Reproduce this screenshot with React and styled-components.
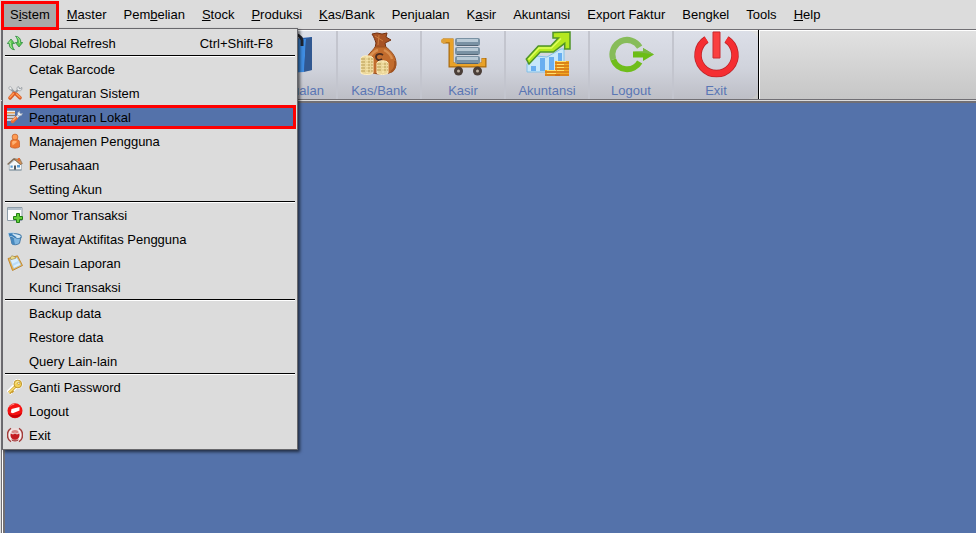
import React from "react";
import styled, { createGlobalStyle, css } from "styled-components";

const GlobalStyle = createGlobalStyle`
    * {
        box-sizing: border-box;
    }

    body {
        margin: 0;
        background: #dcdcdc;
        font-family: "Liberation Sans", Arial, sans-serif;
        font-size: 13px;
        line-height: 16px;
        color: #000;
    }

    button {
        font: inherit;
        color: inherit;
        border: 0;
        margin: 0;
        cursor: default;
    }
`;
const Window = styled.div`
    position: relative;
    min-height: 100vh;
    display: flex;
    flex-direction: column;
`;
const MenuBar = styled.nav`
    display: flex;
    gap: 1px;
    height: 29px;
    padding: 2px 2px 0;
    background: #dcdcdc;
`;
const MenuButton = styled.button`
    position: relative;
    height: 27px;
    padding: 0 8px 2px;
    background: transparent;
    white-space: nowrap;

    ${(props) => props.$open && css`
        z-index: 3;
        background: #a9a9a9;
        outline: 3px solid #fe0000;
        outline-offset: -2px;
    `}
`;
const ToolBar = styled.div`
    display: flex;
    height: 71px;
    margin-left: 1px;
    padding-left: 252px;
    border: 1px solid #716f74;
    border-right: 0;
    box-shadow: inset 0 1px #fff;
    background: linear-gradient(#e2e2e2, #c6c6c6);
`;
const ToolGroup = styled.div`
    display: flex;
    margin-top: 1px;
    border-radius: 0 10px 10px 0;
    background: linear-gradient(#dcdfe8, #d0d3dc 55%, #bdbec6);
`;
const ToolEnd = styled.div`
    width: 2px;
    border-left: 1px solid #000;
    border-right: 1px solid #fff;
`;
const ToolButton = styled.button`
    display: flex;
    flex-direction: column;
    align-items: center;
    width: 84px;
    padding: 0;
    color: #5a76b4;
    background: transparent;

    &:not(:last-child) {
        border-right: 2px solid #c3c5ce;
    }

    svg {
        height: 48px;
        width: 48px;
        margin-bottom: 4px;
        flex: none;
    }
`;
const Desktop = styled.main`
    flex: 1;
    margin: 1px 0 0 1px;
    border-left: 1px solid #716f74;
    background: #fff;
    padding-left: 1px;
    display: flex;
`;
const Canvas = styled.div`
    flex: 1;
    border-top: 2px solid #716f74;
    border-left: 2px solid #716f74;
    background: #5472aa;
`;
const Popup = styled.div`
    position: absolute;
    z-index: 2;
    top: 28px;
    left: 2px;
    width: 296px;
    padding: 2px 1px;
    border: 1px solid #68686c;
    background: #dcdcdc;
    box-shadow: 2px 2px 3px rgba(0, 0, 0, 0.6);
`;
const Item = styled.button`
    display: flex;
    align-items: center;
    gap: 6px;
    width: 100%;
    height: 24px;
    padding: 0 23px 0 3px;
    text-align: left;
    line-height: 18px;
    background: transparent;

    ${(props) => props.$active && css`
        background: #5472aa;
        outline: 3px solid #fe0000;
        outline-offset: -3px;
    `}
`;
const IconSlot = styled.span`
    width: 16px;
    height: 16px;
    flex: none;

    svg {
        display: block;
    }
`;
const Label = styled.span`
    flex: 1;
    padding-top: 1px;
`;
const Shortcut = styled.span`
    padding-top: 1px;
`;
const Separator = styled.hr`
    height: 2px;
    margin: 0 1px;
    border: 0;
    border-top: 1px solid #000;
    border-bottom: 1px solid #fff;
`;

const Small = ({ children }) => (
    <svg width="16" height="16" viewBox="0 0 16 16" aria-hidden="true">{children}</svg>
);
const Large = ({ children }) => (
    <svg width="48" height="48" viewBox="0 0 48 48" aria-hidden="true">{children}</svg>
);

const icons = {
    refresh: (
        <Small>
            <path d="M7.500 14.800C4 14.500 2 12 2.200 8.500H.3L4 4l3.600 4.500H5.400C5.200 11 5.800 13 7.500 14.800z" fill="#5cc850" stroke="#23843a" strokeWidth=".7" />
            <path d="M8.500 1.200C12 1.500 14 4 13.800 7.500h1.900L12 12 8.400 7.500h2.200C10.800 5 10.200 3 8.500 1.200z" fill="#5cc850" stroke="#23843a" strokeWidth=".7" />
            <path d="M4 5.500L2 7.800h1.500C3.300 10 3.800 12 5 13.300M10 2.300c2 1 2.800 3 2.600 5.800" stroke="#b3ea9f" strokeWidth=".9" fill="none" />
        </Small>
    ),
    tools: (
        <Small>
            <path d="M12.800 3L7 9" stroke="#8e959b" strokeWidth="2" />
            <path d="M10 2.500l1.500-1 .6 2 2 .4.600-1.700c1 2.500-.8 4-2.800 3.600L10 4.500z" fill="#eef0f1" stroke="#92989e" strokeWidth=".7" />
            <path d="M3 3l5.500 5.500" stroke="#92989e" strokeWidth="2.200" />
            <path d="M2 2l1.800-.3 1.500 2.600-1.300.8-2.200-1.500z" fill="#f3f3f3" stroke="#92989e" strokeWidth=".6" />
            <path d="M7 8.500L3 13" stroke="#db5a25" strokeWidth="3.600" strokeLinecap="round" />
            <path d="M6.500 8.500L3 12.300" stroke="#ff9b52" strokeWidth="1.600" strokeLinecap="round" />
            <path d="M9.300 9.300l3.700 3.500" stroke="#db5a25" strokeWidth="3.600" strokeLinecap="round" />
            <path d="M9.500 9l3.500 3.300" stroke="#ff9b52" strokeWidth="1.500" strokeLinecap="round" />
        </Small>
    ),
    local: (
        <Small>
            <path d="M0 2h8v3H0z" fill="#e7a863" />
            <path d="M0 2.500h8M0 5h8M0 8h8M0 11h6" stroke="#eef0ee" strokeWidth="1.400" />
            <path d="M0 3.800h8" stroke="#e39a4c" strokeWidth="1.200" />
            <path d="M0 6.500h8M0 9.500h7" stroke="#987d5e" strokeWidth=".9" />
            <path d="M5.500 12.500L9.500 8.500" stroke="#ec6c2f" strokeWidth="3.400" strokeLinecap="round" />
            <path d="M5.500 11.500L9 8.300" stroke="#ffb078" strokeWidth="1.200" />
            <path d="M9.800 8.200l2.700-2.700" stroke="#dce2e8" strokeWidth="2" />
            <path d="M10.500 5.500l.3-2 2-1.600-.1 2.100 1 .8 2-.5-1.300 2.200-2.400.5z" fill="#f3f5f8" stroke="#8a97ab" strokeWidth=".6" />
        </Small>
    ),
    user: (
        <Small>
            <path d="M3.500 14V9.500C3.500 7.300 5 6.200 8 6.200s4.500 1.100 4.500 3.300V14c-2.500 1.500-6.500 1.500-9 0z" fill="#ef7830" stroke="#bc4e18" strokeWidth=".6" />
            <circle cx="8" cy="4" r="2.900" fill="#ff9c54" stroke="#bd5b24" strokeWidth=".7" />
            <path d="M5 9c1-1.700 4.500-1.500 5 0l-4.500 3.500z" fill="#ffb071" />
        </Small>
    ),
    home: (
        <Small>
            <path d="M2.300 7.500L7 3.500h4.500l3 4V13H2.300z" fill="#f5f7f8" stroke="#9daab5" strokeWidth=".7" />
            <path d="M.6 7.500L6.700 2l1.200.2 5.900 5.300" fill="none" stroke="#7e6c59" strokeWidth="1.500" />
            <path d="M7 2h6l2.300 4.700-1.800.8L8 2.700z" fill="#cf9158" stroke="#796148" strokeWidth=".6" />
            <path d="M11 1h2v3h-2z" fill="#e56a35" />
            <path d="M3.500 8.500h2.200v2.300H3.500zM10 8h3v2.500h-3z" fill="#589cd3" />
            <path d="M7 8.500h2V13H7z" fill="#51585e" />
            <path d="M2.300 13h12.200" stroke="#7d909c" />
        </Small>
    ),
    addForm: (
        <Small>
            <path d="M.5.5h14.500v13H.5z" fill="#fbfcfd" stroke="#8e9da9" />
            <path d="M1 1h13.500v2H1z" fill="#b4c1cc" />
            <path d="M9.500 6.500h3v3h3v3h-3v3h-3v-3h-3v-3h3z" fill="#62cf39" stroke="#217e16" />
        </Small>
    ),
    history: (
        <Small>
            <path d="M3.200 5L5 13c2 1.200 5.500 1 7.500-.7L14 6z" fill="#7fb6e0" stroke="#316798" strokeWidth=".8" />
            <path d="M3.200 5L5 13c1 .6 2 .8 3 .7L6.500 6z" fill="#4788bd" />
            <ellipse cx="8.800" cy="5" rx="5.500" ry="2.200" fill="#d5e8f5" stroke="#3c78a9" transform="rotate(8 8.800 5)" />
            <path d="M1 2l6-.3-1.500 1.500 4.500 3-1.500 1.600L4 5 2.500 6.500z" fill="#367cb7" stroke="#cce3f2" strokeWidth=".6" />
        </Small>
    ),
    clipboard: (
        <Small>
            <path d="M1 3.500L10.500.8l5 9.700-10 5z" fill="#f2b64c" stroke="#b87b22" strokeWidth=".8" />
            <path d="M3 4.500l7-2 4 7.500-7.300 3.500z" fill="#d9eeff" stroke="#89b4d9" strokeWidth=".5" />
            <path d="M5.500 10l6-3" stroke="#b9dcf8" strokeWidth="2" />
            <path d="M3.500 2.800l1.300-2.100 2 .7 1.400.5.300 1.500-4.500 1.200z" fill="#f0e08c" stroke="#94834b" strokeWidth=".6" />
        </Small>
    ),
    key: (
        <Small>
            <path d="M8.600 7L1.500 14" stroke="#fff" strokeWidth="5.500" />
            <circle cx="10.800" cy="5" r="4.900" fill="#fff" />
            <path d="M9 7L2 13.800M4.500 11.500l1.700 1.700M3 13l1.200 1.200" stroke="#c89a2c" strokeWidth="2.800" />
            <path d="M9 7L2 13.500" stroke="#f7db6f" strokeWidth="1.700" />
            <circle cx="10.800" cy="5" r="3.900" fill="#f2cf57" stroke="#b28925" strokeWidth=".8" />
            <path d="M8.500 4.500C9 3 10.500 2 12 2.500" stroke="#fff1a8" fill="none" />
            <circle cx="11.800" cy="4.300" r="1.100" fill="#fff" stroke="#a57d20" strokeWidth=".6" />
        </Small>
    ),
    stop: (
        <Small>
            <circle cx="8" cy="7.700" r="7.500" fill="#f51212" />
            <path d="M1 10a7.500 7.500 0 0 0 14-.2C11 13 5 13 1 10z" fill="#c60007" />
            <path d="M4.500 6L12.500 4v3.600L5.800 10.300l-2-.8z" fill="#fff" />
            <path d="M2.800 3.600C4 2 5.500 1.400 7.300 1.300" stroke="#ff8a81" fill="none" />
        </Small>
    ),
    exit: (
        <Small>
            <circle cx="8" cy="8" r="7" fill="#efdcdb" />
            <path d="M4 1.300C-.7 4-.7 12 4 14.700M12 1.300c4.700 2.700 4.700 10.700 0 13.400" fill="none" stroke="#a33c3a" strokeWidth="1.500" />
            <path d="M4.500 3C2 5.500 2 10.500 4.500 13M11.500 3c2.500 2.500 2.500 7.500 0 10" fill="none" stroke="#fbf4f3" strokeWidth="1.200" />
            <path d="M3.800 6.500L6 7.500l2-1 2 1 2.200-1c1 3-.8 6.300-4.200 6.300S2.800 9.500 3.800 6.500z" fill="#c41c22" />
            <path d="M4.300 5.200c1-3 6.400-3 7.400 0L9.800 6.500 8 5.500l-1.800 1z" fill="#d98785" />
            <path d="M4.700 12.800c2 1.500 4.600 1.500 6.600 0" stroke="#8f1b1c" fill="none" />
        </Small>
    ),
    shopping: (
        <Large>
            <path d="M10 9l31-3v33l-27 3z" fill="#285fae" />
            <path d="M10 9l25-1-2 33-19 1z" fill="#3f8de2" />
            <path d="M35 8l6-2v33l-8 2z" fill="#315891" />
            <path d="M14 14V9c0-8 15-8 17 0v6" fill="none" stroke="#20242f" strokeWidth="3" />
        </Large>
    ),
    money: (
        <Large>
            <path d="M17 3l5-1 5 1 5-1-1 4 5 3-6 3 1 5H20l1-5c-1-3-2-6-4-9z" fill="#a75325" stroke="#733111" />
            <path d="M20 5l8 5M24 4l-1 10" stroke="#cd7d40" />
            <path d="M20 16h11c5 4 10 9 10 16 0 8-5 11-15 11S11 40 11 31c0-7 6-10 9-15z" fill="#c26c2d" stroke="#985020" />
            <path d="M15 26c2-4 5-6 8-7M29 19c4 2 7 5 8 9" stroke="#d98f50" strokeWidth="2.500" fill="none" />
            <path d="M36 41c3-2 5-6 4-11" stroke="#a15320" strokeWidth="2" fill="none" />
            <path d="M28 24c-3-2-7-1-7 2s3 4 6 2" fill="none" stroke="#4d2d20" strokeWidth="1.800" />
            <path d="M6 27c1-3 10-3 12 0v15c-2 2-10 2-12 0zM22 32c1-3 10-3 11 0v10c-2 2-9 2-11 0z" fill="#ead69a" stroke="#fff0c2" />
            <path d="M6 28h12M6 31h12M6 34h12M6 37h12M6 40h12M22 33h11M22 36h11M22 39h11" stroke="#b99c50" strokeDasharray="4 1" />
            <path d="M12 25v17M28 30v12" stroke="#fff0b8" />
        </Large>
    ),
    cart: (
        <Large>
            <path d="M4 10h8v24h33v-7" fill="none" stroke="#a96b10" strokeWidth="5" />
            <path d="M4 9.500h8.500v24h32v-6" fill="none" stroke="#e9a228" strokeWidth="3.500" />
            <circle cx="4.500" cy="10" r="2.500" fill="#dca03c" />
            <rect x="16" y="7" width="25" height="8" rx="2" fill="#7991a3" />
            <rect x="16" y="16" width="25" height="8" rx="2" fill="#7991a3" />
            <rect x="16" y="25" width="25" height="8" rx="2" fill="#7991a3" />
            <path d="M18 9.500h21M18 18.500h21M18 27.500h21" stroke="#b8c9d5" strokeWidth="3" />
            <path d="M18 14.500h21M18 23.500h21M18 32.500h21" stroke="#526575" />
            <circle cx="19.500" cy="40" r="4.500" fill="#4a3e38" />
            <circle cx="38.500" cy="40" r="4.500" fill="#4a3e38" />
            <circle cx="19.500" cy="40" r="1.500" fill="#bbb0a3" />
            <circle cx="38.500" cy="40" r="1.500" fill="#bbb0a3" />
        </Large>
    ),
    chart: (
        <Large>
            <path d="M4 33l9-8 11 1 14-8h3v23H4z" fill="#c7e7fa" stroke="#83bfe8" />
            <path d="M8 35h5v5H8zM17 27h5v13h-5zM26 26h5v14h-5zM35 22h4v18h-4z" fill="#68aef0" />
            <path d="M3.300 28L15.300 15h12.400l7.600-8H30V1.500L47 1v17h-5.300v-5.700L30.300 21h-13L6 33z" fill="#b4e81f" stroke="#4f9428" strokeWidth="1.500" />
            <path d="M5.500 28.500L16 17h12.500L38 7.500" stroke="#deff5c" strokeWidth="1.500" fill="none" />
            <path d="M32 30h14v15H32zM22 39h15v6H22z" fill="#f2aa22" />
            <path d="M32 32h14M32 35h14M32 38h14M32 41h14M32 44h14M22 41h10M22 44h15" stroke="#c45d12" />
            <path d="M34 30.500h9M34 33.500h7M34 36.500h7M34 39.500h7M24 39.500h9M24 42.500h9" stroke="#ffe06c" />
        </Large>
    ),
    logout: (
        <Large>
            <path d="M6.200 28.500A14.700 14.700 0 0 0 32.700 30.900" fill="none" stroke="#6fbd1b" strokeWidth="6" />
            <path d="M32.700 16.100A14.700 14.700 0 0 0 6.200 28.500" fill="none" stroke="#87bc5a" strokeWidth="6" />
            <path d="M26 20.500h10V17l11 6.500L36 30v-3.500H26z" fill="#6cbd16" />
            <path d="M26 20.500h10V17l11 6.500z" fill="#7bb944" />
        </Large>
    ),
    power: (
        <Large>
            <path d="M14.500 8.500a18.500 18.500 0 1 0 20 0" fill="none" stroke="#bd2429" strokeWidth="7.500" />
            <path d="M14.500 8.500a18.500 18.500 0 1 0 20 0" fill="none" stroke="#f52e32" strokeWidth="6" />
            <path d="M21 1h7v26h-7z" fill="#fa3f3f" stroke="#c92b30" />
        </Large>
    ),
};

// an underscore marks the mnemonic letter that follows it
const menus = [
    "S_istem", "_Master", "Pem_belian", "_Stock", "_Produksi", "_Kas/Bank", "Pen_jualan",
    "K_asir", "Akuntansi", "Export Faktur", "Bengkel", "Tools", "_Help",
];
const groups = [
    [{ text: "Global Refresh", icon: "refresh", keys: "Ctrl+Shift-F8" }],
    [
        { text: "Cetak Barcode" },
        { text: "Pengaturan Sistem", icon: "tools" },
        { text: "Pengaturan Lokal", icon: "local", active: true },
        { text: "Manajemen Pengguna", icon: "user" },
        { text: "Perusahaan", icon: "home" },
        { text: "Setting Akun" },
    ],
    [
        { text: "Nomor Transaksi", icon: "addForm" },
        { text: "Riwayat Aktifitas Pengguna", icon: "history" },
        { text: "Desain Laporan", icon: "clipboard" },
        { text: "Kunci Transaksi" },
    ],
    [{ text: "Backup data" }, { text: "Restore data" }, { text: "Query Lain-lain" }],
    [
        { text: "Ganti Password", icon: "key" },
        { text: "Logout", icon: "stop" },
        { text: "Exit", icon: "exit" },
    ],
];
const tools = [
    { text: "Penjualan", icon: "shopping" },
    { text: "Kas/Bank", icon: "money" },
    { text: "Kasir", icon: "cart" },
    { text: "Akuntansi", icon: "chart" },
    { text: "Logout", icon: "logout" },
    { text: "Exit", icon: "power" },
];

function Mnemonic({ text }) {
    const at = text.indexOf("_");
    if (at < 0) return text;
    return <>{text.slice(0, at)}<u>{text[at + 1]}</u>{text.slice(at + 2)}</>;
}

function App() {
    return (
        <Window>
            <GlobalStyle />
            <MenuBar>
                {menus.map((menu, i) => (
                    <MenuButton key={menu} $open={i === 0}><Mnemonic text={menu} /></MenuButton>
                ))}
            </MenuBar>
            <ToolBar>
                <ToolGroup>
                    {tools.map((tool) => (
                        <ToolButton key={tool.text}>{icons[tool.icon]}{tool.text}</ToolButton>
                    ))}
                </ToolGroup>
                <ToolEnd />
            </ToolBar>
            <Desktop>
                <Canvas />
            </Desktop>
            <Popup role="menu">
                {groups.map((group, i) => (
                    <React.Fragment key={i}>
                        {i > 0 && <Separator />}
                        {group.map((item) => (
                            <Item key={item.text} role="menuitem" $active={item.active}>
                                <IconSlot>{icons[item.icon]}</IconSlot>
                                <Label>{item.text}</Label>
                                {item.keys && <Shortcut>{item.keys}</Shortcut>}
                            </Item>
                        ))}
                    </React.Fragment>
                ))}
            </Popup>
        </Window>
    );
}

export default App;
